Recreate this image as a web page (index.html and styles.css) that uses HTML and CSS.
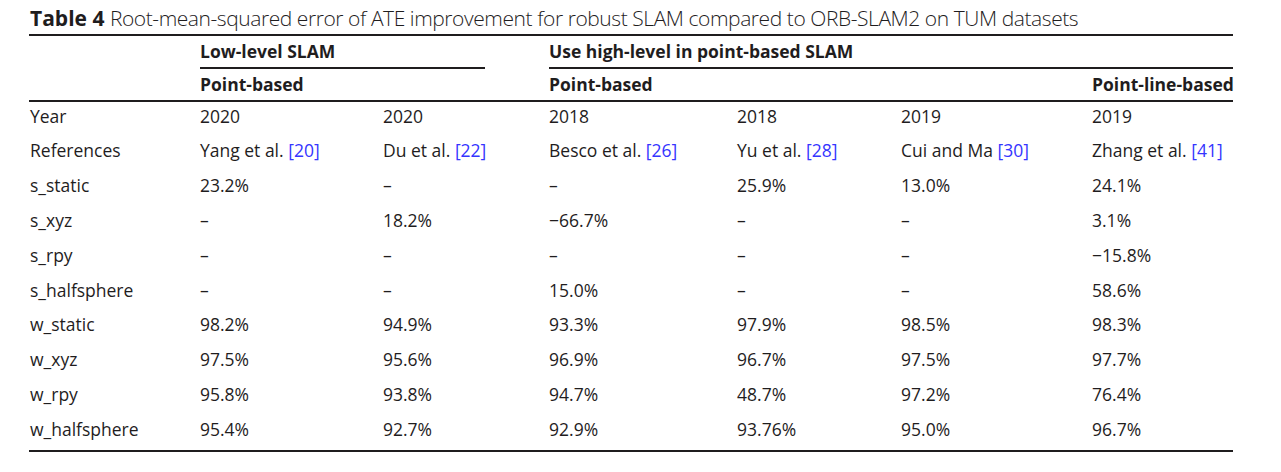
FILE: index.html
```html
<!DOCTYPE html>
<html lang="en">
<head>
<meta charset="utf-8">
<title>Table 4</title>
<link rel="stylesheet" href="styles.css">
</head>
<body>
<div class="page">
  <div class="caption"><b>Table 4</b> <span class="caption-text">Root-mean-squared error of ATE improvement for robust SLAM compared to ORB-SLAM2 on TUM datasets</span></div>
  <table class="tbl">
    <colgroup>
      <col class="c0"><col class="c1"><col class="c2"><col class="c3"><col class="c4"><col class="c5"><col class="c6">
    </colgroup>
    <thead>
      <tr class="h1">
        <th></th>
        <th colspan="2"><div class="grp grp-left">Low-level SLAM</div></th>
        <th colspan="4"><div class="grp">Use high-level in point-based SLAM</div></th>
      </tr>
      <tr class="h2">
        <th></th>
        <th colspan="2">Point-based</th>
        <th colspan="3">Point-based</th>
        <th>Point-line-based</th>
      </tr>
    </thead>
    <tbody>
      <tr><td>Year</td><td>2020</td><td>2020</td><td>2018</td><td>2018</td><td>2019</td><td>2019</td></tr>
      <tr><td>References</td><td>Yang et al. <a class="ref">[20]</a></td><td>Du et al. <a class="ref">[22]</a></td><td>Besco et al. <a class="ref">[26]</a></td><td>Yu et al. <a class="ref">[28]</a></td><td>Cui and Ma <a class="ref">[30]</a></td><td>Zhang et al. <a class="ref">[41]</a></td></tr>
      <tr><td>s_static</td><td>23.2%</td><td>–</td><td>–</td><td>25.9%</td><td>13.0%</td><td>24.1%</td></tr>
      <tr><td>s_xyz</td><td>–</td><td>18.2%</td><td>−66.7%</td><td>–</td><td>–</td><td>3.1%</td></tr>
      <tr><td>s_rpy</td><td>–</td><td>–</td><td>–</td><td>–</td><td>–</td><td>−15.8%</td></tr>
      <tr><td>s_halfsphere</td><td>–</td><td>–</td><td>15.0%</td><td>–</td><td>–</td><td>58.6%</td></tr>
      <tr><td>w_static</td><td>98.2%</td><td>94.9%</td><td>93.3%</td><td>97.9%</td><td>98.5%</td><td>98.3%</td></tr>
      <tr><td>w_xyz</td><td>97.5%</td><td>95.6%</td><td>96.9%</td><td>96.7%</td><td>97.5%</td><td>97.7%</td></tr>
      <tr><td>w_rpy</td><td>95.8%</td><td>93.8%</td><td>94.7%</td><td>48.7%</td><td>97.2%</td><td>76.4%</td></tr>
      <tr><td>w_halfsphere</td><td>95.4%</td><td>92.7%</td><td>92.9%</td><td>93.76%</td><td>95.0%</td><td>96.7%</td></tr>
    </tbody>
  </table>
</div>
</body>
</html>
```
FILE: styles.css
```css
html, body {
  margin: 0;
  padding: 0;
  background: #ffffff;
}

body {
  font-family: "Open Sans", "DejaVu Sans", sans-serif;
  color: #1f1d1e;
}

.page {
  padding: 0 0 0 29px;
  width: 1204px;
}

.caption {
  font-size: 21px;
  line-height: 24px;
  padding: 6px 0 4px 1px;
  white-space: nowrap;
}

.caption b {
  font-weight: 700;
}

.caption-text {
  font-weight: 300;
  letter-spacing: -0.43px;
}

.tbl {
  width: 1204px;
  table-layout: fixed;
  border-collapse: collapse;
  border-top: 2px solid #1f1d1e;
  border-bottom: 2px solid #1f1d1e;
  font-size: 17.5px;
  line-height: 23.8px;
}

.c0 { width: 171px; }
.c1 { width: 183px; }
.c2 { width: 166px; }
.c3 { width: 188px; }
.c4 { width: 164px; }
.c5 { width: 191px; }
.c6 { width: 141px; }

.tbl th,
.tbl td {
  padding: 0;
  text-align: left;
  white-space: nowrap;
  vertical-align: top;
}

.tbl th {
  font-weight: 700;
}

.h1 th {
  padding-top: 4px;
}

.grp {
  padding-bottom: 3px;
  border-bottom: 2px solid #1f1d1e;
}

.grp-left {
  margin-right: 64px;
}

.h2 th {
  padding: 4px 0 3px;
  border-bottom: 2px solid #1f1d1e;
}

.tbl td {
  padding: 3px 0 8px;
}

.tbl td:first-child {
  padding-left: 1px;
}

.ref {
  color: #3535ff;
  text-decoration: none;
}
```
